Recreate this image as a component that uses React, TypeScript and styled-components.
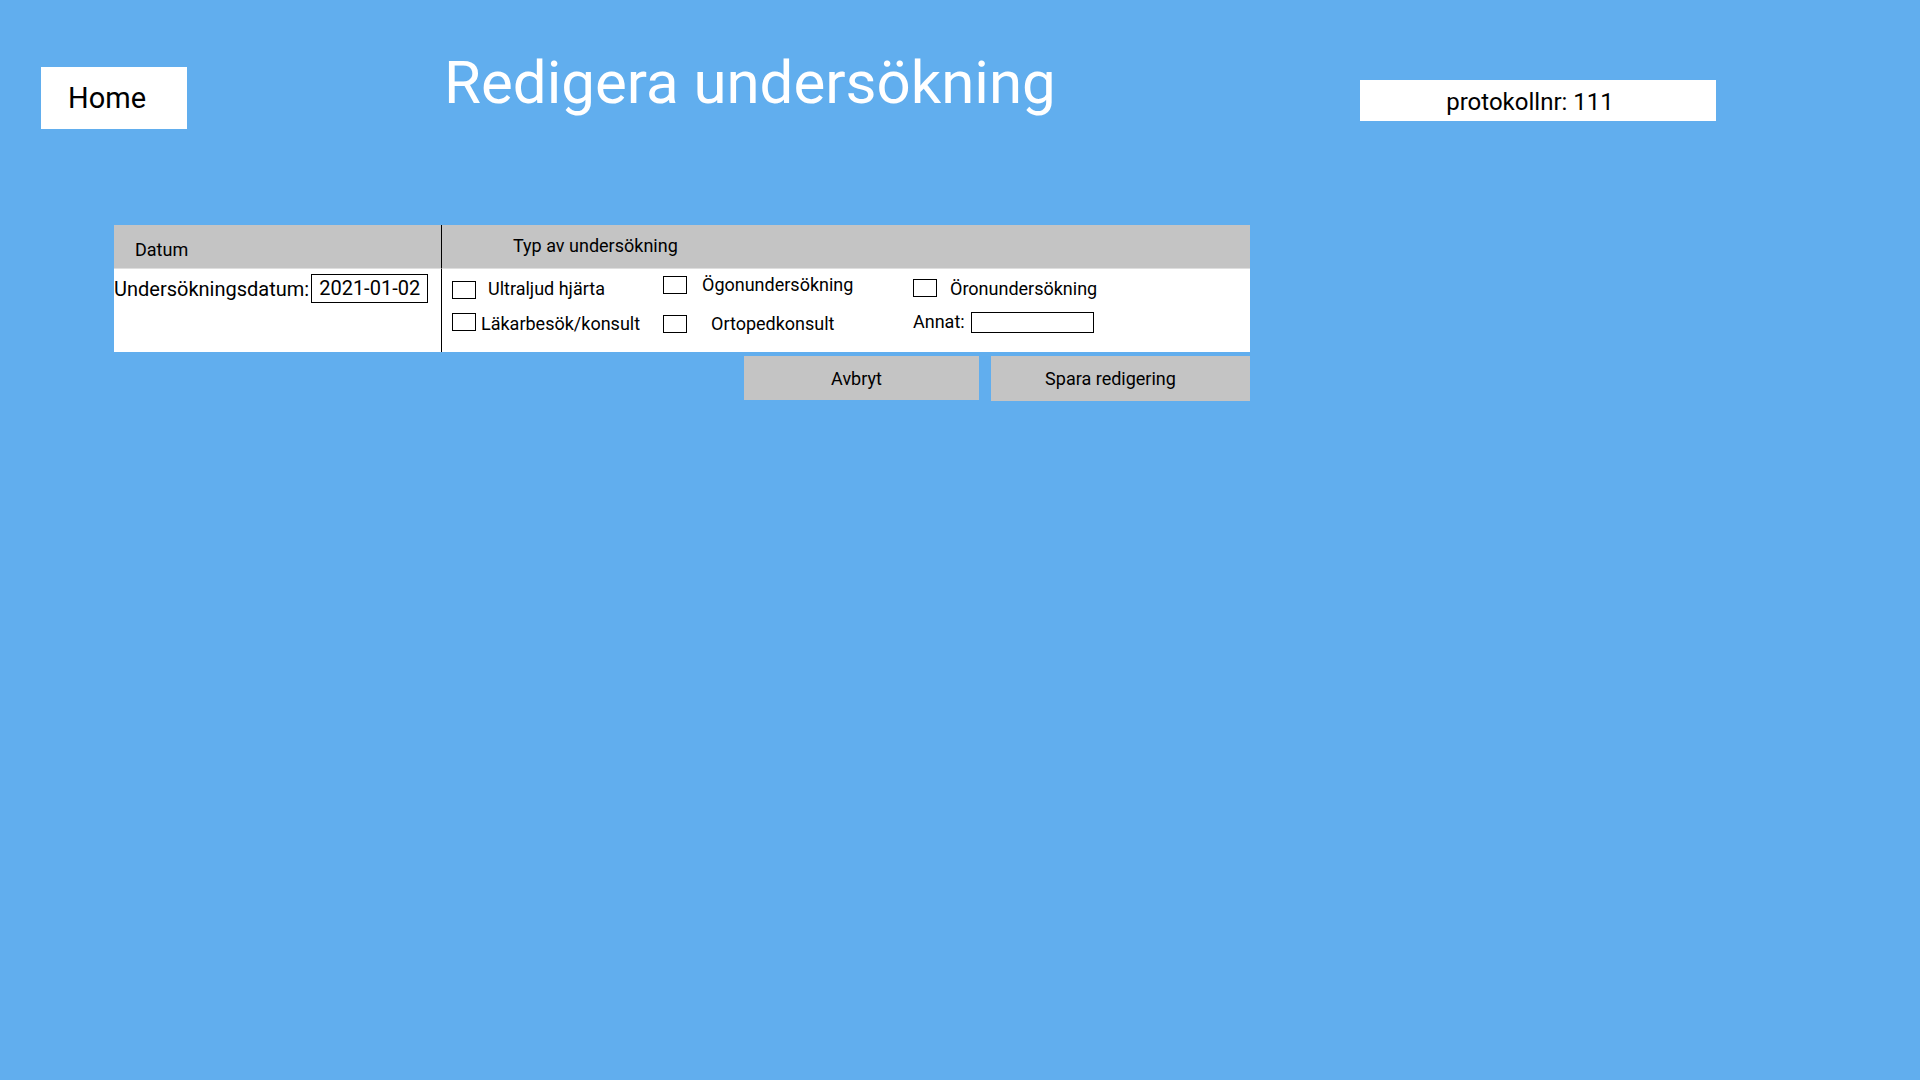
import React from "react";
import styled, { createGlobalStyle } from "styled-components";

const GlobalStyle = createGlobalStyle`
  * { box-sizing: border-box; }
  html, body {
    margin: 0;
    padding: 0;
    background: #61aeee;
    font-family: Roboto, "Liberation Sans", sans-serif;
  }
`;

const Page = styled.div`
  min-height: 100vh;
  background: #61aeee;
  color: #000;
`;

const TopBar = styled.header`
  display: grid;
  grid-template-columns: 146px 1173px 356px;
  align-items: start;
  padding-left: 41px;
`;

const HomeButton = styled.button`
  margin-top: 67px;
  height: 62px;
  border: none;
  background: #fff;
  font-family: Roboto, sans-serif;
  font-size: 29px;
  color: #000;
  text-align: left;
  padding: 0 0 0 27px;
  cursor: pointer;
`;

const Title = styled.h1`
  margin: 48px 0 0;
  padding-left: 257px;
  font-size: 60px;
  font-weight: 400;
  line-height: 70px;
  color: #fff;
  white-space: nowrap;
`;

const ProtocolBox = styled.div`
  margin-top: 80px;
  height: 41px;
  background: #fff;
  display: flex;
  align-items: center;
  justify-content: center;
  padding: 2px 16px 0 0;
  font-size: 24px;
`;

const Form = styled.section`
  width: 1136px;
  margin: 96px 0 0 114px;
`;

const Table = styled.div`
  display: grid;
  grid-template-columns: 328px 1fr;
  grid-template-rows: 43px 84px;
`;

const HeadCell = styled.div<{ $padLeft: number; $padTop: number; $size: number; $divider?: boolean }>`
  background: #c4c4c4;
  padding: ${p => p.$padTop}px 0 0 ${p => p.$padLeft}px;
  font-size: ${p => p.$size}px;
  line-height: 21px;
  border-right: ${p => (p.$divider ? "1px solid #000" : "none")};
`;

const BodyCell = styled.div<{ $divider?: boolean }>`
  background: #fff;
  border-top: 1px solid #dedede;
  border-right: ${p => (p.$divider ? "1px solid #000" : "none")};
`;

const DateRow = styled.div`
  display: flex;
  align-items: center;
  gap: 2px;
  padding-top: 5px;
`;

const DateLabel = styled.label`
  font-size: 20px;
`;

const DateInput = styled.div`
  width: 117px;
  height: 29px;
  border: 1px solid #000;
  padding-left: 7px;
  font-size: 20px;
  line-height: 27px;
`;

const Options = styled.div`
  display: grid;
  grid-template-columns: 211px 250px 1fr;
  grid-template-rows: 37px 40px;
  padding: 5px 0 0 10px;
`;

const Option = styled.div`
  display: flex;
  align-items: flex-start;
`;

const Box = styled.span<{ $top: number }>`
  display: block;
  width: 24px;
  height: 18px;
  border: 1px solid #000;
  margin-top: ${p => p.$top}px;
  flex-shrink: 0;
`;

const OptionLabel = styled.span<{ $top: number; $gap: number }>`
  font-size: 18px;
  line-height: 21px;
  margin-top: ${p => p.$top}px;
  margin-left: ${p => p.$gap}px;
  white-space: nowrap;
`;

const OtherInput = styled.span`
  display: block;
  width: 123px;
  height: 21px;
  border: 1px solid #000;
  margin: 1px 0 0 6px;
`;

const Actions = styled.div`
  display: flex;
  justify-content: flex-end;
  align-items: flex-start;
  gap: 12px;
  margin-top: 4px;
`;

const ActionButton = styled.button<{ $width: number; $height: number; $shift: number }>`
  width: ${p => p.$width}px;
  height: ${p => p.$height}px;
  border: none;
  background: #c4c4c4;
  font-family: Roboto, sans-serif;
  font-size: 18px;
  color: #000;
  padding: 0 ${p => p.$shift}px 0 0;
  cursor: pointer;
`;

type Opt = { label: string; boxTop: number; labelTop: number; gap: number };

const rowOne: Opt[] = [
  { label: "Ultraljud hjärta", boxTop: 7, labelTop: 4, gap: 12 },
  { label: "Ögonundersökning", boxTop: 2, labelTop: 0, gap: 15 },
  { label: "Öronundersökning", boxTop: 5, labelTop: 4, gap: 13 },
];

const rowTwo: Opt[] = [
  { label: "Läkarbesök/konsult", boxTop: 2, labelTop: 2, gap: 5 },
  { label: "Ortopedkonsult", boxTop: 4, labelTop: 2, gap: 24 },
];

const App: React.FC = () => {
  const renderOpt = (o: Opt) => (
    <Option key={o.label}>
      <Box $top={o.boxTop} />
      <OptionLabel $top={o.labelTop} $gap={o.gap}>{o.label}</OptionLabel>
    </Option>
  );

  return (
    <>
      <GlobalStyle />
      <Page>
        <TopBar>
          <HomeButton>Home</HomeButton>
          <Title>Redigera undersökning</Title>
          <ProtocolBox>protokollnr: 111</ProtocolBox>
        </TopBar>

        <Form>
          <Table>
            <HeadCell $padLeft={21} $padTop={14} $size={18} $divider>Datum</HeadCell>
            <HeadCell $padLeft={71} $padTop={10} $size={18}>Typ av undersökning</HeadCell>
            <BodyCell $divider>
              <DateRow>
                <DateLabel>Undersökningsdatum:</DateLabel>
                <DateInput>2021-01-02</DateInput>
              </DateRow>
            </BodyCell>
            <BodyCell>
              <Options>
                {rowOne.map(renderOpt)}
                {rowTwo.map(renderOpt)}
                <Option>
                  <OptionLabel $top={0} $gap={0}>Annat:</OptionLabel>
                  <OtherInput />
                </Option>
              </Options>
            </BodyCell>
          </Table>
          <Actions>
            <ActionButton $width={235} $height={44} $shift={10}>Avbryt</ActionButton>
            <ActionButton $width={259} $height={45} $shift={20}>Spara redigering</ActionButton>
          </Actions>
        </Form>
      </Page>
    </>
  );
};

export default App;
